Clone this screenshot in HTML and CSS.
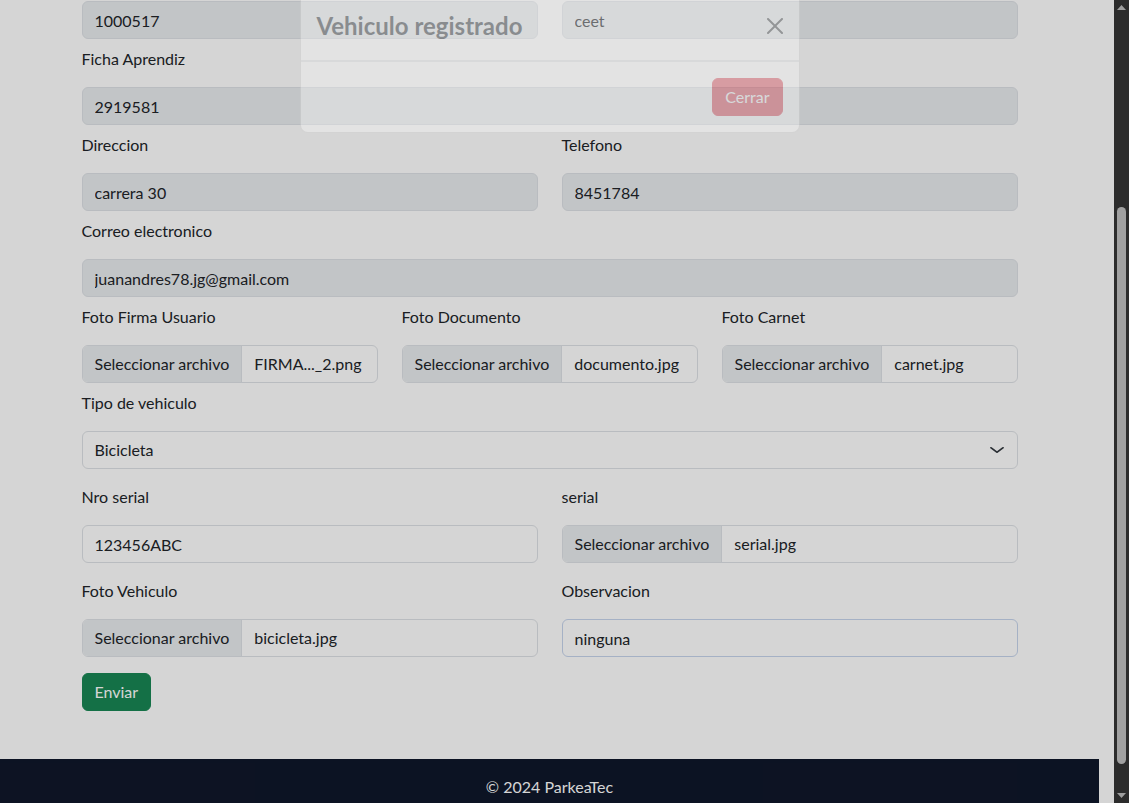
FILE: index.html
```html
<!DOCTYPE html>
<html lang="es">
<head>
<meta charset="utf-8">
<title>ParkeaTec - Registro</title>
<link rel="stylesheet" href="styles.css">
</head>
<body>
<div class="screen">
  <div class="viewport">
    <main class="container">
      <form class="form">
        <div class="row two mb8">
          <div class="field"><input class="control ro" value="1000517" readonly></div>
          <div class="field"><input class="control ro" value="ceet" readonly></div>
        </div>
        <div class="field mb8">
          <label class="label">Ficha Aprendiz</label>
          <input class="control ro" value="2919581" readonly>
        </div>
        <div class="row two mb8">
          <div class="field">
            <label class="label">Direccion</label>
            <input class="control ro" value="carrera 30" readonly>
          </div>
          <div class="field">
            <label class="label">Telefono</label>
            <input class="control ro" value="8451784" readonly>
          </div>
        </div>
        <div class="field mb8">
          <label class="label">Correo electronico</label>
          <input class="control ro" value="juanandres78.jg@gmail.com" readonly>
        </div>
        <div class="row three mb8">
          <div class="field">
            <label class="label">Foto Firma Usuario</label>
            <div class="control file"><span class="file-btn">Seleccionar archivo</span><span class="file-name">FIRMA..._2.png</span></div>
          </div>
          <div class="field">
            <label class="label">Foto Documento</label>
            <div class="control file"><span class="file-btn">Seleccionar archivo</span><span class="file-name">documento.jpg</span></div>
          </div>
          <div class="field">
            <label class="label">Foto Carnet</label>
            <div class="control file"><span class="file-btn">Seleccionar archivo</span><span class="file-name">carnet.jpg</span></div>
          </div>
        </div>
        <div class="field mb16">
          <label class="label">Tipo de vehiculo</label>
          <div class="control select"><span>Bicicleta</span>
            <svg class="chev" width="16" height="12" viewBox="0 0 16 16" preserveAspectRatio="none"><path d="m2 5 6 6 6-6" fill="none" stroke="#343a40" stroke-width="2" stroke-linecap="round" stroke-linejoin="round"/></svg>
          </div>
        </div>
        <div class="row two mb16">
          <div class="field">
            <label class="label">Nro serial</label>
            <input class="control" value="123456ABC">
          </div>
          <div class="field">
            <label class="label">serial</label>
            <div class="control file"><span class="file-btn">Seleccionar archivo</span><span class="file-name">serial.jpg</span></div>
          </div>
        </div>
        <div class="row two mb16">
          <div class="field">
            <label class="label">Foto Vehiculo</label>
            <div class="control file"><span class="file-btn">Seleccionar archivo</span><span class="file-name">bicicleta.jpg</span></div>
          </div>
          <div class="field">
            <label class="label">Observacion</label>
            <input class="control focus" value="ninguna">
          </div>
        </div>
        <div class="actions">
          <button type="button" class="btn btn-success">Enviar</button>
        </div>
      </form>
    </main>
    <footer class="footer">© 2024 ParkeaTec</footer>

    <div class="backdrop"></div>
    <div class="modal-layer">
      <div class="modal-dialog">
        <div class="modal-header">
          <h1 class="modal-title">Vehiculo registrado</h1>
          <button type="button" class="btn-close" aria-label="Close">
            <svg width="16" height="16" viewBox="0 0 16 16"><path d="M.293.293a1 1 0 0 1 1.414 0L8 6.586 14.293.293a1 1 0 1 1 1.414 1.414L9.414 8l6.293 6.293a1 1 0 0 1-1.414 1.414L8 9.414l-6.293 6.293a1 1 0 0 1-1.414-1.414L6.586 8 .293 1.707a1 1 0 0 1 0-1.414z"/></svg>
          </button>
        </div>
        <div class="modal-footer">
          <button type="button" class="btn btn-danger">Cerrar</button>
        </div>
      </div>
    </div>
  </div>
  <div class="scrollbar">
    <div class="sb-arrow"><svg width="9" height="5" viewBox="0 0 9 5"><path d="M0 5 4.5 0 9 5z" fill="#9e9e9e"/></svg></div>
    <div class="sb-track"><div class="sb-thumb"></div></div>
    <div class="sb-arrow"><svg width="9" height="5" viewBox="0 0 9 5"><path d="M0 0 4.5 5 9 0z" fill="#9e9e9e"/></svg></div>
  </div>
</div>
</body>
</html>
```
FILE: styles.css
```css
html, body {
  margin: 0;
  height: 100%;
}
body {
  font-family: Lato, "Liberation Sans", sans-serif;
  font-size: 16px;
  line-height: 1.5;
  color: #212529;
  overflow: hidden;
}
.screen {
  display: flex;
  height: 100vh;
}
.viewport {
  flex: 1;
  position: relative;
  padding-right: 15px;
  background: #fff;
  overflow: hidden;
  display: flex;
  flex-direction: column;
}
.container {
  width: 936px;
  margin: 0 auto;
  padding-top: 1px;
}
.form {
  display: flex;
  flex-direction: column;
  margin: 0 0 48px;
}
.row {
  display: grid;
  column-gap: 24px;
}
.row.two { grid-template-columns: 1fr 1fr; }
.row.three { grid-template-columns: 1fr 1fr 1fr; }
.field {
  display: flex;
  flex-direction: column;
  gap: 16px;
  min-width: 0;
}
.mb8 { margin-bottom: 8px; }
.mb16 { margin-bottom: 16px; }
.label {
  line-height: 24px;
}
.control {
  box-sizing: border-box;
  width: 100%;
  height: 38px;
  margin: 0;
  padding: 6px 12px;
  border: 1px solid #dee2e6;
  border-radius: 6px;
  background: #fff;
  color: #212529;
  font: inherit;
  line-height: 24px;
  outline: none;
}
.control.ro { background: #e9ecef; }
.control.focus { border-color: #c6d4ec; }
.file {
  display: flex;
  padding: 0;
  overflow: hidden;
  white-space: nowrap;
}
.file-btn {
  background: #e9ecef;
  padding: 6px 12px;
  border-right: 1px solid #dee2e6;
}
.file-name {
  padding: 6px 12px;
  overflow: hidden;
}
.select {
  display: flex;
  align-items: center;
  justify-content: space-between;
  padding-right: 12px;
}
.chev { display: block; }
.actions { display: flex; }
.btn {
  display: inline-block;
  padding: 6px 12px;
  border: 1px solid transparent;
  border-radius: 6px;
  font: inherit;
  line-height: 24px;
  color: #fff;
  cursor: pointer;
}
.btn-success { background: #198754; border-color: #198754; }
.btn-danger { background: #dc3545; border-color: #dc3545; margin: 4px; }
.footer {
  background: #0f172a;
  color: #fff;
  text-align: center;
  padding: 16px 0 24px;
  line-height: 24px;
}
.backdrop {
  position: absolute;
  inset: 0;
  background: rgba(0, 0, 0, 0.165);
}
.modal-layer {
  position: absolute;
  top: 0;
  left: 0;
  right: 15px;
  display: flex;
  justify-content: center;
}
.modal-dialog {
  width: 500px;
  box-sizing: border-box;
  margin-top: -9px;
  background: #fff;
  border: 1px solid rgba(0, 0, 0, 0.175);
  border-radius: 8px;
  opacity: 0.35;
}
.modal-header {
  display: flex;
  align-items: center;
  padding: 16px;
  border-bottom: 1px solid #dee2e6;
}
.modal-title {
  margin: 0;
  font-size: 24px;
  font-weight: 700;
  line-height: 36px;
}
.btn-close {
  display: flex;
  box-sizing: content-box;
  width: 16px;
  height: 16px;
  padding: 8px;
  margin: -8px -8px -8px auto;
  border: 0;
  background: transparent;
  opacity: 0.75;
}
.modal-footer {
  display: flex;
  justify-content: flex-end;
  padding: 12px;
  border-top: 1px solid #dee2e6;
}
.scrollbar {
  width: 15px;
  background: #2c2c2c;
  display: flex;
  flex-direction: column;
}
.sb-arrow {
  height: 15px;
  display: flex;
  align-items: center;
  justify-content: center;
}
.sb-track {
  flex: 1;
  display: flex;
  flex-direction: column;
  align-items: center;
}
.sb-thumb {
  width: 9px;
  height: 557px;
  margin-top: 192px;
  border-radius: 5px;
  background: #a1a1a1;
}
```
